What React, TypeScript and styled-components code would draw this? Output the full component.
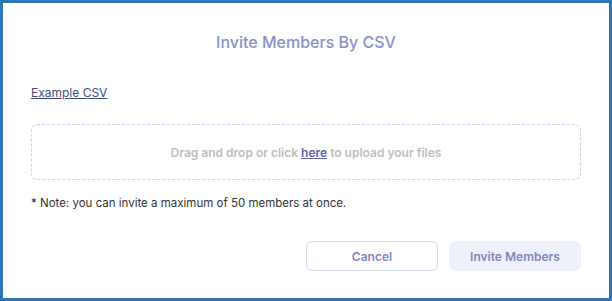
import styled, { createGlobalStyle } from 'styled-components';

const GlobalStyle = createGlobalStyle`
  html, body {
    margin: 0;
    padding: 0;
    background: #ffffff;
  }
  * {
    box-sizing: border-box;
  }
`;

const Frame = styled.div`
  width: 612px;
  height: 301px;
  border: 3px solid #2e75b6;
  background: #ffffff;
  font-family: Inter, "Noto Sans", sans-serif;
  padding: 28px 28px 0 28px;
  display: flex;
  flex-direction: column;
`;

const Title = styled.h2`
  margin: 0;
  text-align: center;
  font-size: 16px;
  font-weight: 500;
  color: #8891c3;
  line-height: 22px;
`;

const ExampleLink = styled.a`
  align-self: flex-start;
  margin-top: 32px;
  font-size: 12px;
  line-height: 16px;
  color: #3d4d7c;
  text-decoration: underline;
  cursor: pointer;
`;

const DropZone = styled.div`
  margin-top: 23px;
  height: 56px;
  border: 1px dashed #c8d5ee;
  border-radius: 6px;
  display: flex;
  align-items: center;
  justify-content: center;
  font-size: 12px;
  font-weight: 600;
  color: #bdbdbd;
`;

const HereLink = styled.a`
  color: #5c66a8;
  text-decoration: underline;
  margin: 0 3px;
  cursor: pointer;
`;

const Note = styled.p`
  margin: 15px 0 0 0;
  font-size: 11.5px;
  line-height: 16px;
  color: #333333;
`;

const Actions = styled.div`
  margin-top: 30px;
  display: flex;
  justify-content: flex-end;
  gap: 11px;
`;

const Button = styled.button<{ $filled?: boolean }>`
  width: 132px;
  height: 30px;
  border-radius: 6px;
  border: 1px solid ${(p) => (p.$filled ? '#eef1fa' : '#d3dbef')};
  background: ${(p) => (p.$filled ? '#eef1fa' : '#ffffff')};
  color: #7e87bb;
  font-family: inherit;
  font-size: 12px;
  font-weight: 600;
  cursor: pointer;
`;

export default function App() {
  return (
    <>
      <GlobalStyle />
      <Frame>
        <Title>Invite Members By CSV</Title>
        <ExampleLink>Example CSV</ExampleLink>
        <DropZone>
          Drag and drop or click<HereLink>here</HereLink>to upload your files
        </DropZone>
        <Note>* Note: you can invite a maximum of 50 members at once.</Note>
        <Actions>
          <Button>Cancel</Button>
          <Button $filled>Invite Members</Button>
        </Actions>
      </Frame>
    </>
  );
}
